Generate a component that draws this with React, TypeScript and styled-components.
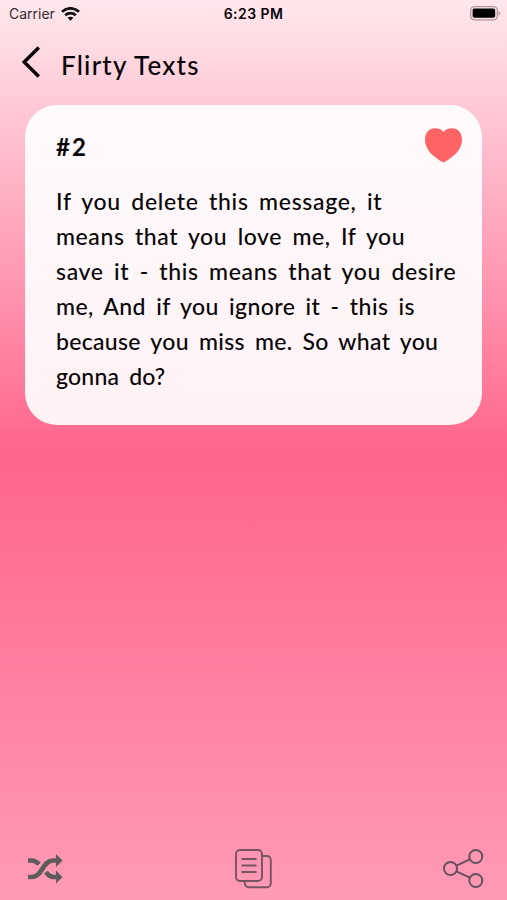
import styled, { createGlobalStyle } from "styled-components";

const messageLines = [
	{ text: "If you delete this message, it", spacing: 0.69 },
	{ text: "means that you love me, If you", spacing: 0.59 },
	{ text: "save it - this means that you desire", spacing: 0.64 },
	{ text: "me, And if you ignore it - this is", spacing: 0.43 },
	{ text: "because you miss me. So what you", spacing: 0.31 },
	{ text: "gonna do?", spacing: 0.2 },
];

export default function App() {
	return (
		<>
			<GlobalStyle />
			<Screen>
				<StatusBar>
					<Carrier>
						<span>Carrier</span>
						<WifiIcon />
					</Carrier>
					<Time>6:23 PM</Time>
					<BatteryIcon />
				</StatusBar>

				<Header>
					<IconButton aria-label="Back">
						<BackIcon />
					</IconButton>
					<Title>Flirty Texts</Title>
				</Header>

				<Card>
					<CardTop>
						<CardNumber>#2</CardNumber>
						<IconButton aria-label="Favorite">
							<HeartIcon />
						</IconButton>
					</CardTop>
					<Message>
						{messageLines.map((line) => (
							<Line key={line.text} $spacing={line.spacing}>
								{line.text}{" "}
							</Line>
						))}
					</Message>
				</Card>

				<Toolbar>
					<IconButton aria-label="Shuffle">
						<ShuffleIcon />
					</IconButton>
					<IconButton aria-label="Copy">
						<CopyIcon />
					</IconButton>
					<IconButton aria-label="Share">
						<ShareIcon />
					</IconButton>
				</Toolbar>
			</Screen>
		</>
	);
}

const WifiIcon = () => (
	<svg width="19" height="14" viewBox="0 0 19 14" fill="none" stroke="#111" strokeWidth="2.8">
		<path d="M1 4.8C5.7.2 13.3.2 18 4.8" />
		<path d="M4.2 8.2c3-2.8 7.6-2.8 10.6 0" />
		<path d="M9.5 13.7 6.6 10.8c1.6-1.5 4.2-1.5 5.8 0z" fill="#111" stroke="none" />
	</svg>
);

const BatteryIcon = () => (
	<svg width="31" height="15" viewBox="0 0 31 15">
		<rect x=".7" y=".7" width="26.6" height="13.1" rx="3.8" fill="none" stroke="#b4959d" strokeWidth="1.3" />
		<rect x="2.6" y="2.6" width="22.6" height="9.2" rx="1.8" fill="#000" />
		<path d="M28.6 5v4.6c2.2-.7 2.2-3.9 0-4.6z" fill="#b4959d" />
	</svg>
);

const BackIcon = () => (
	<svg width="18" height="32" viewBox="0 0 18 32" fill="none" stroke="#090507" strokeWidth="3.4">
		<path d="M16.8 1.5 2.2 16l14.6 14.5" />
	</svg>
);

const HeartIcon = () => (
	<svg width="37" height="35" viewBox="0 0 37 35" fill="#ff6464">
		<path d="M18.5 34.6C8.5 29 0 22 0 11.8 0 4.8 4 .3 10 .3c4 0 6.8 1 8.5 4 1.7-3 4.5-4 8.5-4 6 0 10 4.5 10 11.5 0 10.2-8.5 17.2-18.5 22.8z" />
	</svg>
);

const ShuffleIcon = () => (
	<svg width="35" height="30" viewBox="0 0 35 30" fill="none" stroke="#5c5c5c" strokeWidth="4.7">
		<path d="M0 6.5h3.5c3.2 0 5.5 1.5 7.5 3.8" />
		<path d="M0 23h3.5C14.5 23 14.5 6.5 25 6.5h4" />
		<path d="M18 18.2c2.1 3 4.2 4.8 7.5 4.8H29" />
		<path d="M28 0l6.5 6.5-6.5 6.5zM28 16.5l6.5 6.5-6.5 6.5z" fill="#5c5c5c" stroke="none" />
	</svg>
);

const CopyIcon = () => (
	<svg width="37" height="40" viewBox="0 0 37 40" fill="none" stroke="#755460" strokeWidth="1.9">
		<rect x="1" y="1" width="26" height="31" rx="4" />
		<path d="M27 7h4.8a4 4 0 0 1 4 4v23.3a4 4 0 0 1-4 4h-18a4 4 0 0 1-4-4V32" />
		<path d="M7.2 10h13.6M7.2 16.5h13.6M7.2 23h13.6" strokeLinecap="round" />
	</svg>
);

const ShareIcon = () => (
	<svg width="41" height="40" viewBox="0 0 41 40" fill="none" stroke="#65515a" strokeWidth="2">
		<circle cx="7.5" cy="19.5" r="6.5" />
		<circle cx="32.8" cy="7.5" r="6.5" />
		<circle cx="32.8" cy="31.5" r="6.5" />
		<path d="m13.4 16.7 13.5-6.4M13.4 22.3l13.5 6.4" />
	</svg>
);

const GlobalStyle = createGlobalStyle`
	* {
		box-sizing: border-box;
	}

	body {
		margin: 0;
	}
`;

const Screen = styled.main`
	height: 100vh;
	display: flex;
	flex-direction: column;
	overflow: hidden;
	color: #090507;
	font-family: "Lato", sans-serif;
	background: linear-gradient(#ffe8ed 0%, #ff668c 50%, #ff668c 52%, #ff9bb5 100%);
`;

const StatusBar = styled.div`
	height: 27px;
	padding: 0 6px 0 9px;
	display: grid;
	grid-template-columns: 1fr auto 1fr;
	align-items: center;
	font-family: "Inter", sans-serif;
	font-size: 14px;

	> svg {
		justify-self: end;
	}
`;

const Carrier = styled.div`
	display: flex;
	align-items: center;
	gap: 6px;
	color: #332c30;
`;

const Time = styled.span`
	margin-right: 3px;
	font-weight: 600;
	letter-spacing: 0.45px;
`;

const Header = styled.header`
	height: 78px;
	padding: 0 0 8px 22px;
	display: flex;
	align-items: center;
	gap: 21px;
`;

const Title = styled.h1`
	margin: 5px 0 0;
	font-size: 26px;
	font-weight: 500;
	letter-spacing: 1.2px;
`;

const IconButton = styled.button`
	display: flex;
	padding: 0;
	border: none;
	background: none;
	cursor: pointer;
`;

const Card = styled.section`
	height: 320px;
	margin: 0 25px;
	padding: 24px 20px 0 31px;
	border-radius: 32px;
	background-color: rgba(255, 255, 255, 0.91);
`;

const CardTop = styled.div`
	display: flex;
	justify-content: space-between;
	align-items: flex-start;

	button {
		margin-top: -1px;
	}
`;

const CardNumber = styled.h2`
	margin: 0;
	font-size: 24px;
	font-weight: 700;
	line-height: 35px;
	letter-spacing: 2px;
`;

const Message = styled.p`
	margin: 20px 0 0;
	font-size: 23px;
	font-weight: 500;
	line-height: 35px;
`;

const Line = styled.span<{ $spacing: number }>`
	display: block;
	white-space: nowrap;
	letter-spacing: ${({ $spacing }) => $spacing}px;
	word-spacing: 4px;
`;

const Toolbar = styled.footer`
	margin-top: auto;
	padding: 0 23px 11px 28px;
	display: flex;
	justify-content: space-between;
	align-items: center;
`;
